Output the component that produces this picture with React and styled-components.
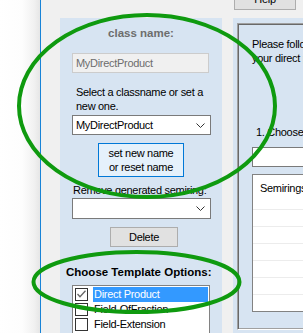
import React from "react";
import styled, { createGlobalStyle } from "styled-components";

const GlobalStyle = createGlobalStyle`
  html, body { margin: 0; padding: 0; overflow: hidden; background: #fff; }
  body { font-family: "Liberation Sans", Arial, sans-serif; font-size: 11px; letter-spacing: -0.3px; color: #000; }
`;

const Screen = styled.div`
  position: relative;
  display: flex;
  width: 303px;
  height: 333px;
  overflow: hidden;
`;

const Backdrop = styled.div`
  flex: none;
  width: 40px;
  background: linear-gradient(to right, #ffffff 0px, #fdfdfd 22px, #f1f1f1 34px, #e6e6e6 40px);
`;

const Window = styled.div`
  flex: none;
  width: 420px;
  border-left: 1px solid #1883d7;
  background: #f0f0f0;
  display: flex;
  flex-direction: column;
`;

const TopBar = styled.div`
  height: 18px;
  display: flex;
  padding-left: 193px;
  align-items: flex-start;
`;

const PushButton = styled.button`
  box-sizing: border-box;
  font-family: "Liberation Sans", Arial, sans-serif;
  font-size: 11px;
  letter-spacing: -0.3px;
  color: #000;
  background: ${(p) => (p.$focused ? "#e5f1fb" : "#e1e1e1")};
  border: 1px solid ${(p) => (p.$focused ? "#0078d7" : "#adadad")};
  padding: 0;
  margin: ${(p) => p.$margin || "0"};
  width: ${(p) => p.$w}px;
  height: ${(p) => p.$h}px;
  line-height: 14px;
  text-align: center;
  flex: none;
`;

const Main = styled.div`
  display: flex;
  gap: 11px;
  padding-left: 19px;
  flex: 1;
`;

const LeftPanel = styled.div`
  flex: none;
  width: 162px;
  background: #d7e4f2;
  display: flex;
  flex-direction: column;
  align-items: flex-start;
`;

const Title = styled.div`
  align-self: stretch;
  margin-top: 8px;
  line-height: 14px;
  text-align: center;
  font-weight: bold;
  font-size: 11.5px;
  letter-spacing: 0;
  color: #6d6d6d;
`;

const TextBox = styled.div`
  box-sizing: border-box;
  margin: ${(p) => p.$margin};
  width: ${(p) => p.$w}px;
  height: 20px;
  border: 1px solid ${(p) => (p.$disabled ? "#cccccc" : "#7a7a7a")};
  background: ${(p) => (p.$disabled ? "#f0f0f0" : "#fff")};
  color: ${(p) => (p.$disabled ? "#6d6d6d" : "#000")};
  padding-left: 3px;
  line-height: 18px;
  white-space: nowrap;
  overflow: hidden;
  flex: none;
`;

const Combo = styled.div`
  box-sizing: border-box;
  margin: ${(p) => p.$margin};
  width: 139px;
  height: ${(p) => p.$h || 20}px;
  border: 1px solid #7a7a7a;
  background: #fff;
  display: flex;
  align-items: center;
  padding-left: 3px;
  padding-right: 5px;
  flex: none;
`;

const ComboText = styled.span`
  flex: 1;
  white-space: nowrap;
  overflow: hidden;
`;

const Label = styled.div`
  margin: ${(p) => p.$margin};
  width: ${(p) => (p.$w ? `${p.$w}px` : "auto")};
  line-height: 14px;
  white-space: ${(p) => (p.$nowrap ? "nowrap" : "normal")};
`;

const Heading = styled.div`
  margin: 18px 0 0 6px;
  line-height: 14px;
  font-weight: bold;
  font-size: 11.5px;
  letter-spacing: 0;
  color: #000;
  white-space: nowrap;
`;

const CheckList = styled.div`
  box-sizing: border-box;
  margin: 6px 0 0 12px;
  width: 138px;
  flex: 1;
  border: 1px solid #828282;
  border-bottom: none;
  background: #fff;
  padding-top: 1px;
`;

const CheckRow = styled.div`
  display: flex;
  align-items: center;
  height: 15px;
  padding-left: 2px;
  padding-right: 1px;
`;

const Box = styled.span`
  box-sizing: border-box;
  width: 13px;
  height: 13px;
  border: 1px solid #333;
  background: #fff;
  flex: none;
  display: flex;
  align-items: center;
  justify-content: center;
`;

const ItemText = styled.span`
  flex: 1;
  margin-left: 5px;
  padding-left: 1px;
  height: 15px;
  line-height: 15px;
  white-space: nowrap;
  background: ${(p) => (p.$selected ? "#3399ff" : "transparent")};
  color: ${(p) => (p.$selected ? "#fff" : "#000")};
`;

const RightPanel = styled.div`
  flex: none;
  width: 240px;
  background: #d7e4f2;
  padding: 5px 0 0 4px;
  box-sizing: border-box;
`;

const GroupBox = styled.div`
  box-sizing: border-box;
  height: 307px;
  width: 230px;
  border-left: 1px solid #a0a0a0;
  border-top: 1px solid #a0a0a0;
  border-bottom: 1px solid #ffffff;
  box-shadow: inset 1px 1px 0 #696969, inset 0 -1px 0 #a0a0a0;
  padding: 13px 0 0 14px;
  display: flex;
  flex-direction: column;
`;

const Grid = styled.div`
  box-sizing: border-box;
  margin-top: 7px;
  height: 138px;
  width: 200px;
  border: 1px solid #828282;
  background: #fff;
  display: flex;
  flex-direction: column;
`;

const GridHeader = styled.div`
  height: 41px;
  padding: 6px 0 0 7px;
  box-sizing: border-box;
  line-height: 14px;
`;

const GridRow = styled.div`
  height: 17px;
  flex: none;
  box-sizing: border-box;
  border-top: 1px solid #ececec;
`;

const Overlay = styled.svg`
  position: absolute;
  left: 0;
  top: 0;
  pointer-events: none;
`;

const Chevron = () => (
  <svg width="9" height="5" viewBox="0 0 9 5">
    <path d="M0.5 0.5 L4.5 4.5 L8.5 0.5" fill="none" stroke="#333" strokeWidth="1" />
  </svg>
);

const Check = () => (
  <svg width="11" height="11" viewBox="0 0 11 11">
    <path d="M1.5 5 L4 7.8 L9.5 1.8" fill="none" stroke="#666" strokeWidth="1.3" />
  </svg>
);

const options = [
  { label: "Direct Product", checked: true, selected: true },
  { label: "Field-OfFraction" },
  { label: "Field-Extension" },
];

export default function App() {
  return (
    <>
      <GlobalStyle />
      <Screen>
        <Backdrop />
        <Window>
          <TopBar>
            <PushButton $w={62} $h={23} $margin="-13px 0 0 0">Help</PushButton>
          </TopBar>
          <Main>
            <LeftPanel>
              <Title>class name:</Title>
              <TextBox $disabled $w={137} $margin="13px 0 0 12px">MyDirectProduct</TextBox>
              <Label $w={138} $margin="12px 0 0 16px">Select a classname or set a new one.</Label>
              <Combo $margin="2px 0 0 12px">
                <ComboText>MyDirectProduct</ComboText>
                <Chevron />
              </Combo>
              <PushButton $focused $w={86} $h={34} $margin="8px 0 0 38px">
                set new name
                <br />
                or reset name
              </PushButton>
              <Label $nowrap $margin="6px 0 0 13px">Remove generated semiring:</Label>
              <Combo $h={21} $margin="1px 0 0 12px">
                <ComboText />
                <Chevron />
              </Combo>
              <PushButton $w={68} $h={20} $margin="8px 0 0 50px">Delete</PushButton>
              <Heading>Choose Template Options:</Heading>
              <CheckList>
                {options.map((o) => (
                  <CheckRow key={o.label}>
                    <Box>{o.checked && <Check />}</Box>
                    <ItemText $selected={o.selected}>{o.label}</ItemText>
                  </CheckRow>
                ))}
              </CheckList>
            </LeftPanel>
            <RightPanel>
              <GroupBox>
                <Label $nowrap $margin="0">
                  Please follow the steps below to create
                  <br />
                  your direct product semiring.
                </Label>
                <Label $nowrap $margin="60px 0 0 4px">1. Choose the semirings:</Label>
                <TextBox $w={200} $margin="8px 0 0 0" />
                <Grid>
                  <GridHeader>Semirings</GridHeader>
                  {[0, 1, 2, 3, 4, 5].map((i) => (
                    <GridRow key={i} />
                  ))}
                </Grid>
              </GroupBox>
            </RightPanel>
          </Main>
        </Window>
        <Overlay width="303" height="333" viewBox="0 0 303 333">
          <ellipse cx="147" cy="106" rx="128" ry="91" fill="none" stroke="#0f9a0f" strokeWidth="4" />
          <ellipse cx="136.5" cy="282" rx="103" ry="30" fill="none" stroke="#0f9a0f" strokeWidth="4" />
        </Overlay>
      </Screen>
    </>
  );
}
